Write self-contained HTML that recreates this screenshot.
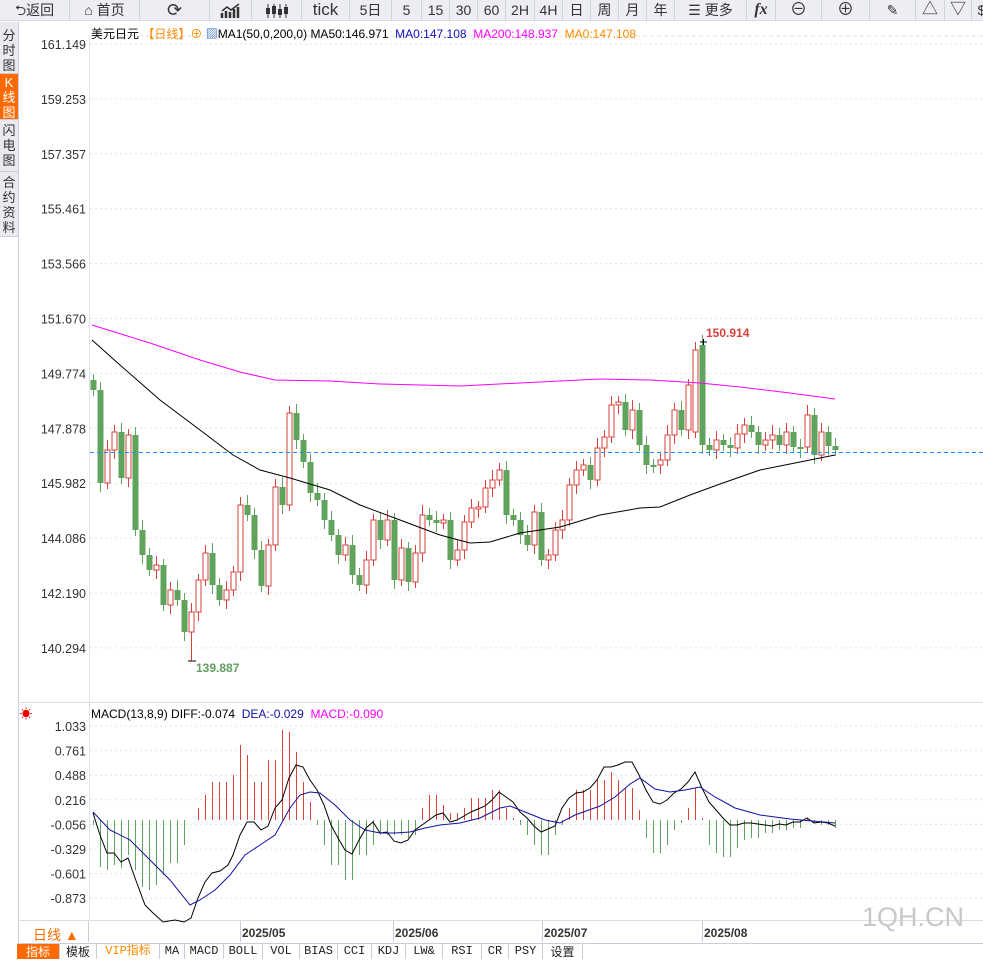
<!DOCTYPE html>
<html><head><meta charset="utf-8">
<style>
*{margin:0;padding:0;box-sizing:border-box}
body{width:983px;height:958px;overflow:hidden;background:#fff;font-family:"Liberation Sans","Noto Sans CJK SC",sans-serif;position:relative}
#tb{position:absolute;left:0;top:0;width:983px;height:21px;background:#eceef3;border-bottom:1px solid #d8dbe2}
#tb div{position:absolute;top:0;height:21px;line-height:20px;font-size:14px;color:#333;text-align:center;border-right:1px solid #d0d3da}
#side{position:absolute;left:0;top:22px;width:18px}
#side div{font-size:13px;line-height:15px;text-align:center;color:#333;background:#e8eaee;border-bottom:1px solid #ccd;padding:3px 0}
#side div.on{background:#ff6a00;color:#fff}
.t{position:absolute;font-size:12px;white-space:nowrap}
#tabs{position:absolute;left:17px;top:943px;height:15px;width:966px;border-top:1px solid #ccd}
#tabs div{position:absolute;top:0;height:15px;line-height:15px;font-size:12px;text-align:center;border-right:1px solid #ccd;color:#222;font-family:"Liberation Mono","Noto Sans CJK SC",monospace}
</style></head><body>
<div id="tb">
<div style="left:0;width:70px">⮌返回</div>
<div style="left:70px;width:70px">⌂ 首页</div>
<div style="left:140px;width:70px;font-size:18px">⟳</div>
<div style="left:210px;width:42px"><svg width="22" height="16" viewBox="0 0 22 16" style="margin-top:3px"><path d="M2 15V10M6 15V8M10 15V9M14 15V6M18 15V4" stroke="#333" stroke-width="2.5"/><path d="M2 8L7 4L11 7L19 1" stroke="#333" fill="none" stroke-width="1.5"/></svg></div>
<div style="left:252px;width:50px"><svg width="24" height="16" viewBox="0 0 24 16" style="margin-top:3px"><path d="M3 1V15M9 1V15M15 1V15M21 1V15" stroke="#333"/><rect x="1" y="5" width="4" height="6" fill="#333"/><rect x="7" y="3" width="4" height="8" fill="#333"/><rect x="13" y="6" width="4" height="6" fill="#333"/><rect x="19" y="4" width="4" height="7" fill="#333"/></svg></div>
<div style="left:302px;width:48px;font-size:17px">tick</div>
<div style="left:350px;width:42px">5日</div>
<div style="left:392px;width:30px">5</div>
<div style="left:422px;width:28px">15</div>
<div style="left:450px;width:28px">30</div>
<div style="left:478px;width:28px">60</div>
<div style="left:506px;width:29px">2H</div>
<div style="left:535px;width:28px">4H</div>
<div style="left:563px;width:28px">日</div>
<div style="left:591px;width:28px">周</div>
<div style="left:619px;width:28px">月</div>
<div style="left:647px;width:28px">年</div>
<div style="left:675px;width:72px">☰ 更多</div>
<div style="left:747px;width:29px;font-weight:bold;font-style:italic;font-family:'Liberation Serif',serif;font-size:16px">fx</div>
<div style="left:776px;width:46px;font-size:17px">⊖</div>
<div style="left:822px;width:48px;font-size:17px">⊕</div>
<div style="left:870px;width:46px">✎</div>
<div style="left:916px;width:29px;font-size:16px">△</div>
<div style="left:945px;width:27px;font-size:16px">▽</div>
<div style="left:972px;width:20px">$</div>
</div>
<div id="side">
<div style="height:52px;padding-top:6px">分<br>时<br>图</div>
<div class="on" style="height:46px;padding-top:1px">K<br>线<br>图</div>
<div style="height:52px;padding-top:3px">闪<br>电<br>图</div>
<div style="height:65px;padding-top:3px">合<br>约<br>资<br>料</div>
</div>
<div style="position:absolute;left:18px;top:22px;width:1px;height:936px;background:#ccd"></div>
<svg id="c" width="983" height="958" style="position:absolute;left:0;top:0"></svg>
<div class="t" style="left:91px;top:25px;font-size:12px;color:#000">美元日元 <span style="color:#ff8a00">【日线】⊕</span> <span style="color:#2060c0">▨</span>MA1(50,0,200,0) MA50:146.971 &nbsp;<span style="color:#1010c0">MA0:147.108</span> &nbsp;<span style="color:#ff00ff">MA200:148.937</span> &nbsp;<span style="color:#ff8a00">MA0:147.108</span></div>
<div class="t" style="left:91px;top:707px;color:#000">MACD(13,8,9) DIFF:-0.074 &nbsp;<span style="color:#1010a0">DEA:-0.029</span> &nbsp;<span style="color:#ff00ff">MACD:-0.090</span></div>
<div class="t" style="left:20px;top:705px;color:#e00;font-size:12px">☀</div>
<div class="t" style="left:706px;top:326px;color:#d9413b;font-weight:bold">150.914</div>
<div class="t" style="left:196px;top:661px;color:#60a060;font-weight:bold">139.887</div>
<div class="t" style="left:33px;top:925px;color:#ff6a00;font-size:14px">日线 ▲</div>
<div class="t" style="left:862px;top:902px;color:#c8c8c8;font-size:27px">1QH.CN</div>
<div id="tabs">
<div style="left:0;width:43px;background:#ff6a00;color:#fff;font-family:'Noto Sans CJK SC',sans-serif">指标</div>
<div style="left:43px;width:37px;font-family:'Noto Sans CJK SC',sans-serif">模板</div>
<div style="left:80px;width:63px;color:#ff8a00">VIP指标</div>
<div style="left:143px;width:25px">MA</div>
<div style="left:168px;width:39px">MACD</div>
<div style="left:207px;width:39px">BOLL</div>
<div style="left:246px;width:37px">VOL</div>
<div style="left:283px;width:38px">BIAS</div>
<div style="left:321px;width:34px">CCI</div>
<div style="left:355px;width:34px">KDJ</div>
<div style="left:389px;width:37px">LW&amp;</div>
<div style="left:426px;width:39px">RSI</div>
<div style="left:465px;width:27px">CR</div>
<div style="left:492px;width:34px">PSY</div>
<div style="left:526px;width:40px;font-family:'Noto Sans CJK SC',sans-serif">设置</div>
</div>
<script>
(function(){
var s='';
function L(x1,y1,x2,y2,c,w,d){s+='<line x1="'+x1+'" y1="'+y1+'" x2="'+x2+'" y2="'+y2+'" stroke="'+c+'" stroke-width="'+(w||1)+'"'+(d?' stroke-dasharray="'+d+'"':'')+'/>';}
function T(x,y,t,c,a){s+='<text x="'+x+'" y="'+y+'" fill="'+(c||'#333')+'" font-size="12.5" font-family="Liberation Sans,sans-serif" text-anchor="'+(a||'end')+'">'+t+'</text>';}
function P(pts,c,w){s+='<polyline fill="none" stroke="'+c+'" stroke-width="'+(w||1)+'" points="'+pts.map(function(p){return p.join(',')}).join(' ')+'"/>';}
var i,y,x;
L(89.5,36,89.5,920,'#dde2ea');
var pl=['161.149','159.253','157.357','155.461','153.566','151.670','149.774','147.878','145.982','144.086','142.190','140.294'];
for(i=0;i<pl.length;i++){y=44+i*54.9;T(86,y+5,pl[i]);L(90,y,983,y,'#e4e4e4',1,'2 3');}
L(90,36,983,36,'#e0e0e0',1,'4 3');
L(18,702.5,983,702.5,'#d8dde6');
var ml=['1.033','0.761','0.488','0.216','-0.056','-0.329','-0.601','-0.873'];
for(i=0;i<ml.length;i++){y=726+i*24.6;T(86,y+5,ml[i]);L(90,y,983,y,'#e4e4e4',1,'2 3');}
L(18,920.5,983,920.5,'#d8dde6');
[[240,'2025/05'],[393,'2025/06'],[542,'2025/07'],[702,'2025/08']].forEach(function(d){L(d[0]+.5,921,d[0]+.5,942,'#ccd');s+='<text x="'+(d[0]+2)+'" y="937" font-size="12" font-weight="bold" fill="#333" font-family="Liberation Sans,sans-serif">'+d[1]+'</text>';});
L(88.5,921,88.5,942,'#ccd');
var cl=[390,483,450,432,478,435,530,555,570,565,605,590,600,632,612,580,553,585,600,590,572,505,515,550,586,545,487,505,413,440,462,493,500,520,535,555,545,575,585,560,520,540,520,580,548,582,553,515,520,523,520,560,550,522,508,507,488,480,470,515,520,535,545,512,560,555,530,520,485,470,465,480,448,437,405,402,430,410,445,465,465,460,435,410,430,385,350,445,450,440,445,448,434,425,432,445,440,435,445,432,447,447,415,455,432,446,450];
var prev=380;
for(i=0;i<cl.length;i++){x=93+i*7;var o=prev,c=cl[i];
 if(i==87){o=345;} if(i==86){o=432}
 var up=c<o,bt=Math.min(o,c),bb=Math.max(o,c);if(bb-bt<2)bb=bt+2;
 var hi=bt-6-(i*7%5),lo=bb+6+(i*3%6);
 if(i==86)hi=342; if(i==14)lo=661;
 var col=up?'#d9413b':'#5fa35d';
 L(x+.5,hi,x+.5,lo,col);
 if(up)s+='<rect x="'+(x-2)+'" y="'+bt+'" width="5" height="'+(bb-bt)+'" fill="#fff" stroke="'+col+'"/>';
 else s+='<rect x="'+(x-2.5)+'" y="'+bt+'" width="6" height="'+(bb-bt)+'" fill="'+col+'"/>';
 prev=c;}
L(700,342,707,342,'#000');L(703.5,339,703.5,345,'#000');
L(188,661,196,661,'#000');
L(90,452.5,983,452.5,'#1e90ff',1,'4 3');
P([[92,340],[120,365],[160,400],[200,430],[233,455],[260,470],[290,478],[330,490],[360,505],[400,520],[440,535],[470,543],[490,542],[520,533],[560,527],[600,515],[640,508],[660,507],[690,495],[720,484],[760,470],[800,462],[835,455]],'#000');
P([[92,325],[150,343],[200,360],[240,372],[275,380],[330,381],[380,384],[460,386],[520,383],[600,379],[650,380],[700,383],[740,387],[790,393],[835,399]],'#ff00ff');
var h=[-5,-47,-50,-45,-48,-35,-50,-67,-70,-65,-55,-43,-43,-25,0,12,25,38,38,38,45,75,65,38,38,60,60,90,88,68,38,18,-5,-25,-45,-45,-60,-60,-35,-35,-25,-15,-15,-15,-15,-18,-15,12,25,25,15,7,7,12,22,22,22,30,30,12,2,-5,-15,-25,-35,-35,-15,-5,12,30,30,30,40,40,48,40,32,32,10,-18,-33,-33,-25,-10,-3,12,32,2,-25,-33,-37,-37,-28,-20,-18,-18,-13,-13,-10,-10,-8,-8,2,-3,-5,-5,-8];
for(i=0;i<h.length;i++){x=93+i*7;if(h[i]==0)continue;L(x+.5,820,x+.5,820-h[i],h[i]>0?'#e0403a':'#5fa35d');}
P([[93,813],[100,835],[107,853],[114,853],[121,862],[128,858],[135,878],[145,905],[152,912],[163,922],[175,920],[184,922],[191,918],[198,898],[205,882],[212,873],[220,871],[228,865],[233,855],[240,835],[247,822],[254,822],[261,830],[268,826],[275,808],[282,800],[289,778],[296,765],[303,767],[310,780],[317,790],[324,805],[331,825],[338,838],[345,850],[352,854],[359,840],[366,828],[373,822],[380,833],[387,832],[394,841],[401,843],[408,840],[415,830],[422,825],[429,820],[436,815],[443,813],[450,822],[457,820],[464,816],[471,812],[478,809],[485,806],[492,800],[499,792],[506,797],[513,802],[520,812],[527,818],[534,826],[541,832],[548,829],[555,826],[562,808],[569,798],[576,793],[583,792],[590,788],[597,780],[604,767],[611,767],[618,765],[625,762],[632,762],[639,775],[646,790],[653,802],[660,804],[667,800],[674,793],[681,789],[688,782],[695,772],[702,788],[709,802],[716,810],[723,818],[730,825],[737,825],[744,823],[751,823],[758,824],[765,825],[772,826],[779,824],[786,825],[793,822],[800,822],[807,818],[814,823],[821,822],[828,823],[835,826]],'#000');
P([[93,812],[110,830],[130,840],[150,860],[170,880],[190,905],[200,900],[215,890],[230,875],[245,855],[260,845],[275,835],[290,808],[300,795],[310,792],[320,793],[335,805],[350,820],[365,830],[380,833],[395,833],[410,832],[425,828],[440,825],[460,823],[480,818],[500,808],[510,806],[525,812],[545,820],[560,823],[575,815],[600,806],[615,797],[630,784],[640,778],[655,789],[670,792],[685,790],[700,787],[715,797],[735,808],[760,815],[790,819],[835,823]],'#1010a0');
document.getElementById('c').innerHTML=s;
})();
</script>
</body></html>
